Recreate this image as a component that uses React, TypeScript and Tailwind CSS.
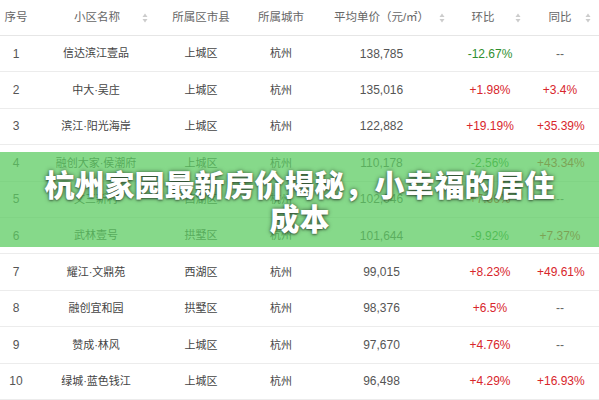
import React from "react";

type Row = {
  no: number;
  name: string;
  district: string;
  city: string;
  price: string;
  mom: string;
  yoy: string;
};

const rows: Row[] = [
  { no: 1, name: "信达滨江壹品", district: "上城区", city: "杭州", price: "138,785", mom: "-12.67%", yoy: "--" },
  { no: 2, name: "中大·吴庄", district: "上城区", city: "杭州", price: "135,016", mom: "+1.98%", yoy: "+3.4%" },
  { no: 3, name: "滨江·阳光海岸", district: "上城区", city: "杭州", price: "122,882", mom: "+19.19%", yoy: "+35.39%" },
  { no: 4, name: "融创大家·侯潮府", district: "上城区", city: "杭州", price: "110,178", mom: "-2.56%", yoy: "+43.34%" },
  { no: 5, name: "文三新村", district: "西湖区", city: "杭州", price: "102,046", mom: "+7.66%", yoy: "--" },
  { no: 6, name: "武林壹号", district: "拱墅区", city: "杭州", price: "101,644", mom: "-9.92%", yoy: "+7.37%" },
  { no: 7, name: "耀江·文鼎苑", district: "西湖区", city: "杭州", price: "99,015", mom: "+8.23%", yoy: "+49.61%" },
  { no: 8, name: "融创宜和园", district: "拱墅区", city: "杭州", price: "98,376", mom: "+6.5%", yoy: "--" },
  { no: 9, name: "赞成·林风", district: "上城区", city: "杭州", price: "97,670", mom: "+4.76%", yoy: "--" },
  { no: 10, name: "绿城·蓝色钱江", district: "上城区", city: "杭州", price: "96,498", mom: "+4.29%", yoy: "+16.93%" },
];

function SortIcon() {
  return (
    <svg width="6" height="10" viewBox="0 0 6 10" className="absolute top-1/2 -translate-y-1/2" aria-hidden="true">
      <path d="M3 0.5 L5.5 4 L0.5 4 Z" fill="#cccccc" />
      <path d="M3 9.5 L5.5 6 L0.5 6 Z" fill="#cccccc" />
    </svg>
  );
}

function changeColor(v: string) {
  if (v.startsWith("+")) return "text-[#d8262c]";
  if (v.startsWith("-") && v !== "--") return "text-[#2f8f2f]";
  return "text-[#666]";
}

const cols = "grid grid-cols-[32px_128px_82px_78px_123px_94px_46px_1fr]";

export default function App() {
  return (
    <div className="relative w-[599px] h-[400px] bg-white overflow-hidden font-['Liberation_Sans','Noto_Sans_CJK_SC',sans-serif]">
      {/* header */}
      <div className={`${cols} h-[36px] items-center border-b border-[#e6e6e6] text-[11.5px] text-[#666]`}>
        <div className="text-center">序号</div>
        <div className="relative text-center pl-[2px]">
          小区名称
          <span className="absolute left-[110px] top-1/2"><SortIcon /></span>
        </div>
        <div className="text-center">所属区市县</div>
        <div className="text-center">所属城市</div>
        <div className="relative text-center">
          平均单价（元/㎡）
          <span className="absolute left-[119px] top-1/2"><SortIcon /></span>
        </div>
        <div className="relative text-center pr-[14px]">
          环比
          <span className="absolute left-[72px] top-1/2"><SortIcon /></span>
        </div>
        <div className="relative text-center">
          同比
          <span className="absolute left-[48px] top-1/2"><SortIcon /></span>
        </div>
        <div />
      </div>

      {/* rows */}
      {rows.map((r) => (
        <div key={r.no} className={`${cols} h-[36.4px] items-center border-b border-[#ececec] text-[#555]`}>
          <div className="text-center text-[12px]">{r.no}</div>
          <div className="text-center text-[11px] text-[#444]">{r.name}</div>
          <div className="text-center text-[11px] text-[#444]">{r.district}</div>
          <div className="text-center text-[11px] text-[#444]">{r.city}</div>
          <div className="text-center text-[12px]">{r.price}</div>
          <div className={`text-center text-[12px] ${changeColor(r.mom)}`}>{r.mom}</div>
          <div className={`text-center text-[12px] ${changeColor(r.yoy)}`}>{r.yoy}</div>
          <div />
        </div>
      ))}

      {/* title banner */}
      <div className="absolute left-0 right-0 top-[152px] h-[95px] bg-[rgba(94,204,99,0.75)] flex items-center justify-center">
        <h1 className="w-[525px] text-center text-white font-black text-[30px] leading-[34px] font-['Noto_Sans_CJK_SC',sans-serif] [text-shadow:0_0_4px_rgba(0,0,0,0.55),0_1px_2px_rgba(0,0,0,0.4)]">
          杭州家园最新房价揭秘，小幸福的居住成本
        </h1>
      </div>
    </div>
  );
}
